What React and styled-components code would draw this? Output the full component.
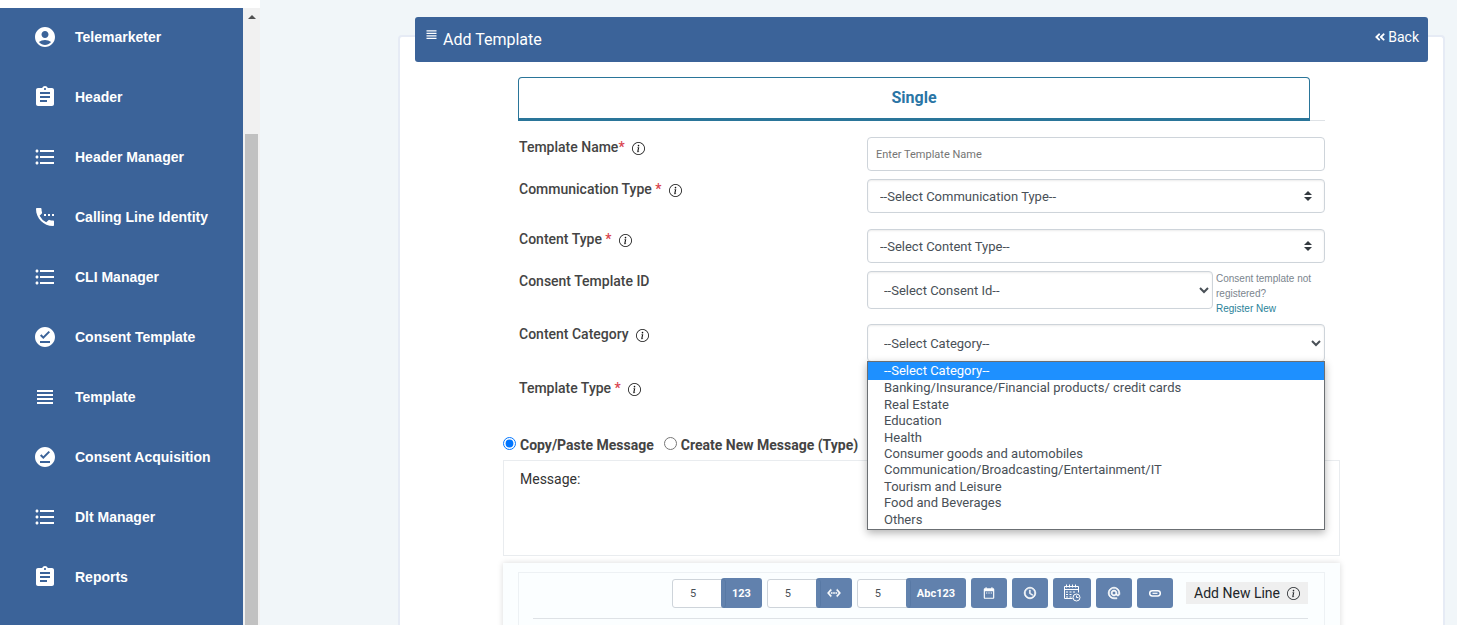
import React from "react";
import styled, { createGlobalStyle, css } from "styled-components";
import {
  MdAccountCircle,
  MdAssignment,
  MdFormatListBulleted,
  MdSettingsPhone,
  MdOfflinePin,
  MdViewHeadline,
  MdSettingsEthernet,
  MdDateRange,
  MdAccessTime,
  MdAlternateEmail,
} from "react-icons/md";
import { FaAngleDoubleLeft } from "react-icons/fa";
import { BsInfoCircle } from "react-icons/bs";

const menu = [
  { label: "Telemarketer", icon: MdAccountCircle },
  { label: "Header", icon: MdAssignment },
  { label: "Header Manager", icon: MdFormatListBulleted },
  { label: "Calling Line Identity", icon: MdSettingsPhone },
  { label: "CLI Manager", icon: MdFormatListBulleted },
  { label: "Consent Template", icon: MdOfflinePin },
  { label: "Template", icon: MdViewHeadline },
  { label: "Consent Acquisition", icon: MdOfflinePin },
  { label: "Dlt Manager", icon: MdFormatListBulleted },
  { label: "Reports", icon: MdAssignment },
];

const categories = [
  "--Select Category--",
  "Banking/Insurance/Financial products/ credit cards",
  "Real Estate",
  "Education",
  "Health",
  "Consumer goods and automobiles",
  "Communication/Broadcasting/Entertainment/IT",
  "Tourism and Leisure",
  "Food and Beverages",
  "Others",
];

function CalendarClock() {
  return (
    <svg width="18" height="18" viewBox="0 0 18 18" fill="none" stroke="currentColor">
      <path d="M9.500 14.500h-8v-12h14v6M1.500 5.500h14" />
      <path d="M3.500 0.500v3M6.500 0.500v3M9.500 0.500v3M12.500 0.500v3" />
      <path d="M3 8h2M6.500 8h2M10 8h2M3 10.500h2M6.500 10.500h2M3 13h2M6.500 13h2" strokeWidth="1.200" />
      <circle cx="13.500" cy="13.500" r="3.500" />
      <path d="M13.500 11.500v2h2" />
    </svg>
  );
}

function LinkPill() {
  return (
    <svg width="14" height="14" viewBox="0 0 14 14" fill="none" stroke="currentColor">
      <rect x="1.700" y="4.700" width="10.600" height="5.200" rx="2.600" strokeWidth="1.500" />
      <path d="M4.500 7.300h5" strokeWidth="1.200" />
    </svg>
  );
}

function Label({ htmlFor, text, star, info }) {
  return (
    <LabelCell>
      <FieldLabel htmlFor={htmlFor}>
        {text}
        {star && <Star>{star}</Star>}
      </FieldLabel>
      {info && <BsInfoCircle size={13} />}
    </LabelCell>
  );
}

function App() {
  return (
    <Page>
      <GlobalStyle />
      <Side>
        <Sidebar>
          {menu.map(({ label, icon: Icon }) => (
            <MenuItem href="#" key={label}>
              <Icon size={24} />
              <span>{label}</span>
            </MenuItem>
          ))}
        </Sidebar>
        <ScrollTrack>
          <ScrollArrow />
          <ScrollThumb />
        </ScrollTrack>
      </Side>
      <Main>
        <Card>
          <CardHeader>
            <MdViewHeadline size={15} />
            <Title>Add Template</Title>
            <BackLink href="#">
              <FaAngleDoubleLeft size={12} />
              Back
            </BackLink>
          </CardHeader>
          <Form>
            <Tabs>
              <Tab type="button">Single</Tab>
            </Tabs>
            <Row $gap={8}>
              <Label htmlFor="name" text="Template Name" star="*" info />
              <TextInput id="name" placeholder="Enter Template Name" />
            </Row>
            <Row $gap={16}>
              <Label htmlFor="comm" text="Communication Type" star=" *" info />
              <CustomSelect id="comm">
                <option>--Select Communication Type--</option>
              </CustomSelect>
            </Row>
            <Row $gap={8}>
              <Label htmlFor="content" text="Content Type" star=" *" info />
              <CustomSelect id="content">
                <option>--Select Content Type--</option>
              </CustomSelect>
            </Row>
            <Row $gap={8}>
              <Label htmlFor="consent" text="Consent Template ID" />
              <ConsentCell>
                <NativeSelect id="consent">
                  <option>--Select Consent Id--</option>
                </NativeSelect>
                <Hint>
                  Consent template not registered?
                  <br />
                  <a href="#">Register New</a>
                </Hint>
              </ConsentCell>
            </Row>
            <Row $gap={16}>
              <Label htmlFor="category" text="Content Category" info />
              <CategoryCell>
                <NativeSelect id="category">
                  {categories.map((c) => (
                    <option key={c}>{c}</option>
                  ))}
                </NativeSelect>
                <OptionList role="listbox" aria-label="Content Category">
                  {categories.map((c, i) => (
                    <Option role="option" aria-selected={i === 0} $active={i === 0} key={c}>
                      {c}
                    </Option>
                  ))}
                </OptionList>
              </CategoryCell>
            </Row>
            <Row $gap={36}>
              <Label text="Template Type" star=" *" info />
            </Row>
            <Wide>
              <Choices>
                <Choice>
                  <input type="radio" name="mode" defaultChecked />
                  Copy/Paste Message
                </Choice>
                <Choice>
                  <input type="radio" name="mode" />
                  Create New Message (Type)
                </Choice>
              </Choices>
              <MessageBox>
                <label htmlFor="message">Message:</label>
                <textarea id="message" />
              </MessageBox>
              <Panel>
                <PanelInner>
                  <Tools>
                    <Group>
                      <Count aria-label="Numeric length" defaultValue="5" />
                      <ToolButton>123</ToolButton>
                    </Group>
                    <Group>
                      <Count aria-label="Space length" defaultValue="5" />
                      <ToolButton aria-label="Width">
                        <MdSettingsEthernet size={14} strokeWidth={1} />
                      </ToolButton>
                    </Group>
                    <Group>
                      <Count aria-label="Alphanumeric length" defaultValue="5" />
                      <ToolButton>Abc123</ToolButton>
                    </Group>
                    <ToolButton aria-label="Date">
                      <MdDateRange size={14} />
                    </ToolButton>
                    <ToolButton aria-label="Time">
                      <MdAccessTime size={14} strokeWidth={1} />
                    </ToolButton>
                    <ToolButton aria-label="Date and time" $tight>
                      <CalendarClock />
                    </ToolButton>
                    <ToolButton aria-label="Email">
                      <MdAlternateEmail size={14} strokeWidth={1} />
                    </ToolButton>
                    <ToolButton aria-label="Link">
                      <LinkPill />
                    </ToolButton>
                    <NewLine>
                      Add New Line
                      <BsInfoCircle size={13} />
                    </NewLine>
                  </Tools>
                </PanelInner>
              </Panel>
            </Wide>
          </Form>
        </Card>
      </Main>
    </Page>
  );
}

const GlobalStyle = createGlobalStyle`
  * {
    box-sizing: border-box;
  }
  body {
    margin: 0;
    height: 100vh;
    overflow: hidden;
    font-family: Roboto, "Liberation Sans", sans-serif;
    font-size: 14px;
    color: #495057;
    background: #f1f6f9;
  }
  input, select, button, textarea {
    font-family: inherit;
  }
  a {
    text-decoration: none;
  }
`;

const Page = styled.div`
  display: flex;
  height: 100vh;
`;

const Side = styled.div`
  display: flex;
  width: 260px;
  flex-shrink: 0;
  border-top: 8px solid #fff;
`;

const Sidebar = styled.nav`
  display: flex;
  flex-direction: column;
  flex: 1;
  background: #3b6399;
  overflow: hidden;
`;

const MenuItem = styled.a`
  display: flex;
  align-items: center;
  flex-shrink: 0;
  gap: 18px;
  height: 60px;
  padding: 0 0 2px 33px;
  font-family: "Liberation Sans", sans-serif;
  font-size: 14px;
  font-weight: bold;
  color: #fff;
`;

const ScrollTrack = styled.div`
  display: flex;
  flex-direction: column;
  align-items: center;
  width: 17px;
  padding: 7px 2px 0;
  background: #f1f1f1;
`;

const ScrollArrow = styled.div`
  border: 4px solid transparent;
  border-top: none;
  border-bottom-color: #505050;
`;

const ScrollThumb = styled.div`
  flex: 1;
  width: 13px;
  margin-top: 115px;
  background: #c1c1c1;
`;

const Main = styled.main`
  flex: 1;
  min-width: 0;
  padding: 35px 12px 0 138px;
`;

const Card = styled.section`
  height: 100%;
  padding: 0 15px;
  border: 2px solid #e6ebf5;
  border-bottom: none;
  border-radius: 4px 4px 0 0;
  background: #fff;
`;

const CardHeader = styled.header`
  display: flex;
  align-items: flex-start;
  height: 45px;
  margin-top: -20px;
  padding: 10px 9px 0;
  border-radius: 3px;
  color: #fff;
  background: #3b6399;
`;

const Title = styled.h1`
  flex: 1;
  margin: 3px 0 0 4px;
  font-size: 16px;
  font-weight: 400;
  line-height: 20px;
`;

const BackLink = styled.a`
  display: flex;
  align-items: center;
  gap: 2px;
  font-size: 14px;
  line-height: 20px;
  color: #fff;
`;

const Form = styled.form`
  padding: 15px 103px 0;
`;

const Tabs = styled.div`
  margin-bottom: 16px;
  padding-right: 15px;
  border-bottom: 1px solid #dee2e6;
`;

const Tab = styled.button`
  display: block;
  width: 100%;
  height: 44px;
  margin-bottom: -1px;
  padding: 0 0 2px;
  border: 1px solid #2a7599;
  border-bottom-width: 3px;
  border-radius: 4px 4px 0 0;
  font-size: 16px;
  font-weight: 700;
  color: #2a75a5;
  background: #fff;
`;

const Row = styled.div`
  display: grid;
  grid-template-columns: 349fr 458fr;
  align-items: start;
  margin-bottom: ${(p) => p.$gap}px;
`;

const LabelCell = styled.div`
  display: flex;
  align-items: center;
  gap: 7px;
  height: 20px;
  padding-left: 1px;
  color: #111;

  svg {
    margin-top: 3px;
  }
`;

const FieldLabel = styled.label`
  font-size: 14px;
  font-weight: 500;
  line-height: 20px;
  white-space: pre;
  color: #444;
`;

const Star = styled.span`
  color: #d9434e;
`;

const field = css`
  width: 100%;
  min-width: 0;
  border: 1px solid #ced4da;
  border-radius: 4px;
  color: #495057;
  background-color: #fff;
`;

const TextInput = styled.input`
  ${field}
  height: 34px;
  padding: 0 8px;
  font-size: 11px;

  &::placeholder {
    color: #757575;
  }
`;

const CustomSelect = styled.select`
  ${field}
  appearance: none;
  height: 34px;
  padding: 0 28px 0 12px;
  font-size: 13px;
  box-shadow: inset 0 1px 2px rgba(0, 0, 0, 0.08);
  background-image: url("data:image/svg+xml,%3csvg xmlns='http://www.w3.org/2000/svg' viewBox='0 0 4 5'%3e%3cpath fill='%23343a40' d='M2 0L0 2h4zm0 5L0 3h4z'/%3e%3c/svg%3e");
  background-repeat: no-repeat;
  background-position: right 12px center;
  background-size: 8px 10px;
`;

const NativeSelect = styled.select`
  ${field}
  height: 38px;
  padding: 0 0 0 12px;
  font-size: 13px;
  box-shadow: inset 0 1px 2px rgba(0, 0, 0, 0.08);
`;

const ConsentCell = styled.div`
  display: grid;
  grid-template-columns: 346fr 109fr;
  gap: 3px;
  align-items: start;
`;

const Hint = styled.small`
  height: 45px;
  font-family: "Liberation Sans", sans-serif;
  font-size: 10px;
  line-height: 15px;
  color: #7b858e;

  a {
    color: #2a8299;
  }
`;

const CategoryCell = styled.div`
  position: relative;
`;

const OptionList = styled.ul`
  position: absolute;
  z-index: 1;
  top: 37px;
  left: 0;
  right: 0;
  display: grid;
  grid-template-rows: 18px repeat(9, 1fr);
  height: 169px;
  margin: 0;
  padding: 0 0 1px;
  border: 1px solid #6b6f73;
  list-style: none;
  background: #fff;
  box-shadow: 0 3px 8px rgba(0, 0, 0, 0.3);
`;

const Option = styled.li`
  display: flex;
  align-items: center;
  padding-left: 16px;
  font-size: 13px;
  line-height: 16px;
  color: ${(p) => (p.$active ? "#fff" : "#495057")};
  background: ${(p) => (p.$active ? "#1e90ff" : "transparent")};
`;

// spans the gutters on both sides of the fields
const Wide = styled.div`
  margin: 0 -15px;
`;

const Choices = styled.div`
  display: flex;
  gap: 10px;
  height: 26px;
`;

const Choice = styled.label`
  display: flex;
  align-items: center;
  gap: 4px;
  height: 22px;
  font-size: 14px;
  font-weight: 700;
  color: #444;

  input {
    width: 13px;
    height: 13px;
    margin: 0 0 4px;
  }
`;

const MessageBox = styled.div`
  display: flex;
  flex-direction: column;
  height: 96px;
  padding: 8px 16px;
  border: 1px solid #e9ecef;
  line-height: 20px;
  color: #333;

  textarea {
    flex: 1;
    padding: 0;
    border: none;
    resize: none;
    outline: none;
  }
`;

const Panel = styled.div`
  margin-top: 7px;
  padding: 9px 15px 0;
  background: #fbfeff;
  box-shadow: 0 0 6px rgba(0, 0, 0, 0.15);
`;

const PanelInner = styled.div`
  height: 80px;
  padding: 5px 16px 0 14px;
  border: 1px solid #edf1f4;
`;

const Tools = styled.div`
  display: flex;
  align-items: center;
  justify-content: flex-end;
  gap: 5px;
  padding-bottom: 10px;
  border-bottom: 1px solid #dee2e6;
`;

const Group = styled.div`
  display: flex;
  align-items: flex-end;
`;

const Count = styled.input`
  width: 54px;
  height: 29px;
  padding: 0 17px;
  border: 1px solid #ced4da;
  border-radius: 3px;
  font-size: 11px;
  color: #495057;
  background: #fff;
`;

const ToolButton = styled.button.attrs({ type: "button" })`
  display: flex;
  align-items: center;
  justify-content: center;
  height: 30px;
  padding: 0 ${(p) => (p.$tight ? 10 : 11)}px;
  border: none;
  border-radius: 3px;
  font-size: 11px;
  font-weight: 700;
  color: #fff;
  background: #3b6399;
  opacity: 0.8;

  ${Group} & {
    margin-left: -5px;
  }

  path[fill="none"] {
    stroke: none;
  }
`;

const NewLine = styled.button.attrs({ type: "button" })`
  display: flex;
  align-items: center;
  gap: 7px;
  height: 22px;
  margin-left: 8px;
  padding: 0 8px;
  border: none;
  font-size: 14px;
  color: #212529;
  background: #efefef;
`;

export default App;
